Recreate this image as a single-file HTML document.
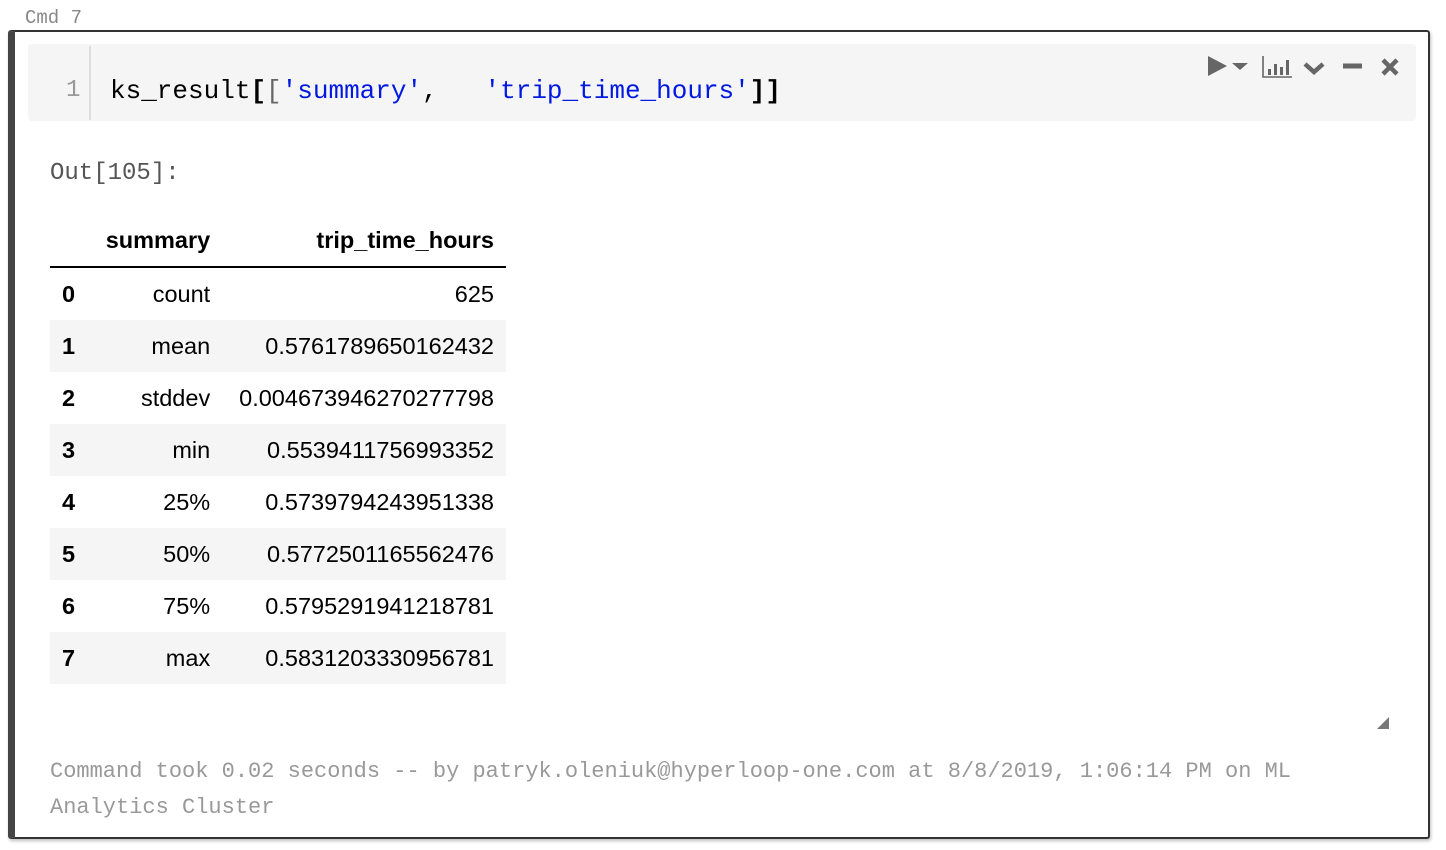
<!DOCTYPE html>
<html><head><style>
body{margin:0;width:1446px;height:850px;background:#fff;position:relative;overflow:hidden;font-family:"Liberation Sans",sans-serif}
.mono{font-family:"Liberation Mono",monospace}
.abs{position:absolute}
table{border-collapse:collapse;font-size:23.5px;color:#000}
td,th{height:52px;padding:0 12px;text-align:right;white-space:nowrap}
th{font-weight:bold}
tr.s td,tr.s th{background:#f5f5f5}
</style></head><body>
<div class="abs mono" style="left:25px;top:7px;font-size:19px;color:#888">Cmd 7</div>
<div class="abs" style="left:8px;top:30px;width:1413px;height:805px;border:2px solid #333;border-left:7px solid #444;border-radius:3px;box-shadow:1px 2px 3px rgba(0,0,0,.25)"></div>
<div class="abs" style="left:28px;top:44px;width:1388px;height:77px;background:#f5f5f5;border-radius:4px"></div>
<div class="abs" style="left:89px;top:46px;width:2px;height:74px;background:#ddd"></div>
<div class="abs mono" style="left:66px;top:77px;font-size:24px;color:#999">1</div>
<div class="abs mono" style="left:110px;top:76px;font-size:26px;white-space:pre;color:#000">ks_result<b>[</b><span style="color:#666">[</span><span style="color:#0018e0">'summary'</span>,   <span style="color:#0018e0">'trip_time_hours'</span><b>]]</b></div>
<svg class="abs" style="left:1205px;top:52px" width="200" height="32" viewBox="0 0 200 32">
<g fill="#666" stroke="#666">
<path d="M3 4 L22 14 L3 24Z" stroke="none"/>
<path d="M27 11 L43 11 L35 18Z" stroke="none"/>
<path d="M58 4 V25 H87" fill="none" stroke-width="1.6"/>
<rect x="63" y="17" width="3" height="6" stroke="none"/><rect x="69" y="12" width="3" height="11" stroke="none"/><rect x="75" y="15" width="3" height="8" stroke="none"/><rect x="81" y="8" width="3" height="15" stroke="none"/>
<path d="M100 12 L109 20 L118 12" fill="none" stroke-width="4.5"/>
<path d="M138 14 H157" stroke-width="5"/>
<path d="M178 8 L192 22 M192 8 L178 22" stroke-width="4.5"/>
</g></svg>
<div class="abs mono" style="left:50px;top:160px;font-size:24px;color:#555">Out[105]:</div>
<table class="abs" style="left:50px;top:214px;width:456px">
<tr style="border-bottom:2px solid #000"><th style="height:51px;width:20px"></th><th>summary</th><th style="width:260px">trip_time_hours</th></tr>
<tr><th style="text-align:left">0</th><td>count</td><td>625</td></tr>
<tr class="s"><th style="text-align:left">1</th><td>mean</td><td>0.5761789650162432</td></tr>
<tr><th style="text-align:left">2</th><td>stddev</td><td>0.004673946270277798</td></tr>
<tr class="s"><th style="text-align:left">3</th><td>min</td><td>0.5539411756993352</td></tr>
<tr><th style="text-align:left">4</th><td>25%</td><td>0.5739794243951338</td></tr>
<tr class="s"><th style="text-align:left">5</th><td>50%</td><td>0.5772501165562476</td></tr>
<tr><th style="text-align:left">6</th><td>75%</td><td>0.5795291941218781</td></tr>
<tr class="s"><th style="text-align:left">7</th><td>max</td><td>0.5831203330956781</td></tr>
</table>
<svg class="abs" style="left:1375px;top:715px" width="16" height="16"><path d="M2 14 L14 2 L14 14Z" fill="#777"/></svg>
<div class="abs mono" style="left:50px;top:754px;width:1300px;font-size:22px;line-height:36px;color:#999">Command took 0.02 seconds -- by patryk.oleniuk@hyperloop-one.com at 8/8/2019, 1:06:14 PM on ML Analytics Cluster</div>
</body></html>
